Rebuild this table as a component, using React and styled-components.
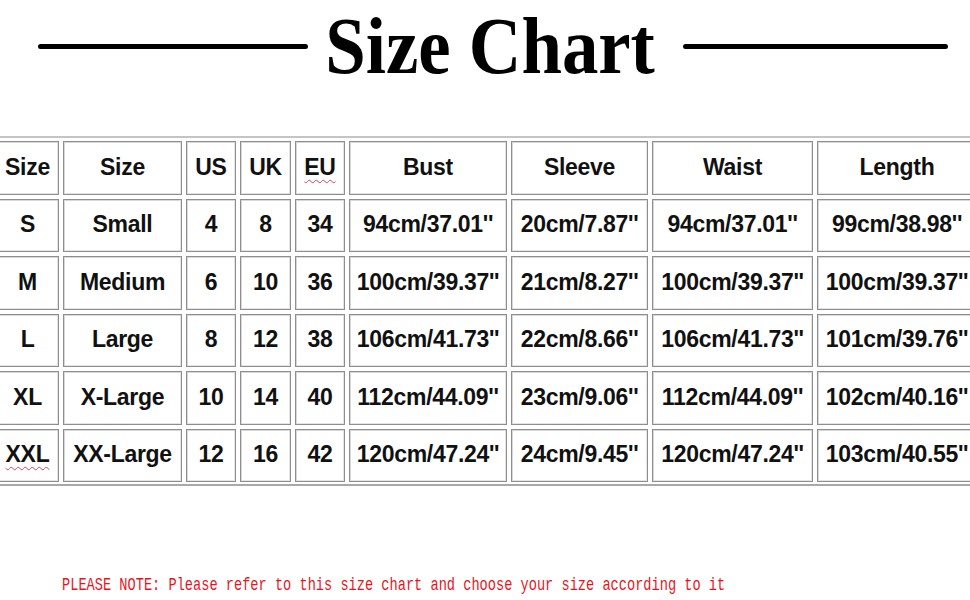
import React from "react";
import styled, { createGlobalStyle } from "styled-components";

const GlobalStyle = createGlobalStyle`
   html, body {
      margin: 0;
      padding: 0;
      background: #ffffff;
      overflow: hidden;
   }
   body {
      width: 970px;
      height: 600px;
   }
`;

const Page = styled.div`
   width: 970px;
   height: 600px;
   overflow: hidden;
   display: flex;
   flex-direction: column;
`;

const TitleBar = styled.div`
   height: 92px;
   display: flex;
   align-items: center;
   padding-left: 38px;
`;

const Rule = styled.div`
   flex: none;
   width: ${(p) => p.$width}px;
   height: 5px;
   border-radius: 3px;
   background: #000;
`;

const TitleBox = styled.div`
   flex: none;
   width: 330px;
   margin: 0 28px 0 17px;
   display: flex;
   justify-content: center;
`;

const Title = styled.h1`
   margin: 0;
   font-family: "Liberation Serif", "DejaVu Serif", serif;
   font-weight: 700;
   font-size: 80px;
   line-height: 1;
   color: #000;
   white-space: nowrap;
   transform: scaleX(${(p) => p.$squeeze});
`;

const Table = styled.div`
   margin-top: 44px;
   margin-left: -4px;
   width: 981px;
   display: grid;
   grid-template-columns: ${(p) => p.$cols.map((c) => c + "px").join(" ")};
   grid-auto-rows: 53.5px;
   gap: 4px;
   padding: 3px 0 2px;
   border-top: 2px solid #c4c4c4;
   border-bottom: 2px solid #a8a8a8;
`;

const Cell = styled.div`
   box-sizing: border-box;
   display: flex;
   align-items: center;
   justify-content: center;
   border: 1px solid #8e8e8e;
   box-shadow: inset 1px 1px 0 #d8d8d8, inset -1px -1px 0 #e4e4e4;
   font-family: "Liberation Sans", Arial, sans-serif;
   font-weight: 700;
   font-size: 23px;
   letter-spacing: -0.3px;
   color: #111;
   white-space: nowrap;
   padding-bottom: 1px;
`;

const Flagged = styled.span`
   text-decoration: underline wavy #d0485a;
   text-decoration-thickness: 1px;
   text-underline-offset: 4px;
`;

const Note = styled.p`
   margin: 89px 0 0 62px;
   font-family: "Liberation Mono", "DejaVu Sans Mono", monospace;
   font-size: 18px;
   line-height: 20px;
   color: #e8141c;
   white-space: nowrap;
   transform: scaleX(0.758);
   transform-origin: left center;
`;

const columns = [63, 119, 50, 51, 50, 158, 137, 161, 160];

const rows = [
   ["Size", "Size", "US", "UK", "EU", "Bust", "Sleeve", "Waist", "Length"],
   ["S", "Small", "4", "8", "34", "94cm/37.01''", "20cm/7.87''", "94cm/37.01''", "99cm/38.98''"],
   ["M", "Medium", "6", "10", "36", "100cm/39.37''", "21cm/8.27''", "100cm/39.37''", "100cm/39.37''"],
   ["L", "Large", "8", "12", "38", "106cm/41.73''", "22cm/8.66''", "106cm/41.73''", "101cm/39.76''"],
   ["XL", "X-Large", "10", "14", "40", "112cm/44.09''", "23cm/9.06''", "112cm/44.09''", "102cm/40.16''"],
   ["XXL", "XX-Large", "12", "16", "42", "120cm/47.24''", "24cm/9.45''", "120cm/47.24''", "103cm/40.55''"],
];

// words the original page had spell-check marks under
const flagged = ["EU", "XXL"];

const App = () => {
   return (
      <>
         <GlobalStyle />
         <Page>
            <TitleBar>
               <Rule $width={270} />
               <TitleBox>
                  <Title $squeeze={0.91}>Size Chart</Title>
               </TitleBox>
               <Rule $width={265} />
            </TitleBar>
            <Table $cols={columns}>
               {rows.map((row, r) =>
                  row.map((text, c) => (
                     <Cell key={r + "-" + c}>
                        {flagged.includes(text) ? <Flagged>{text}</Flagged> : text}
                     </Cell>
                  ))
               )}
            </Table>
            <Note>PLEASE NOTE: Please refer to this size chart and choose your size according to it</Note>
         </Page>
      </>
   );
};

export default App;
